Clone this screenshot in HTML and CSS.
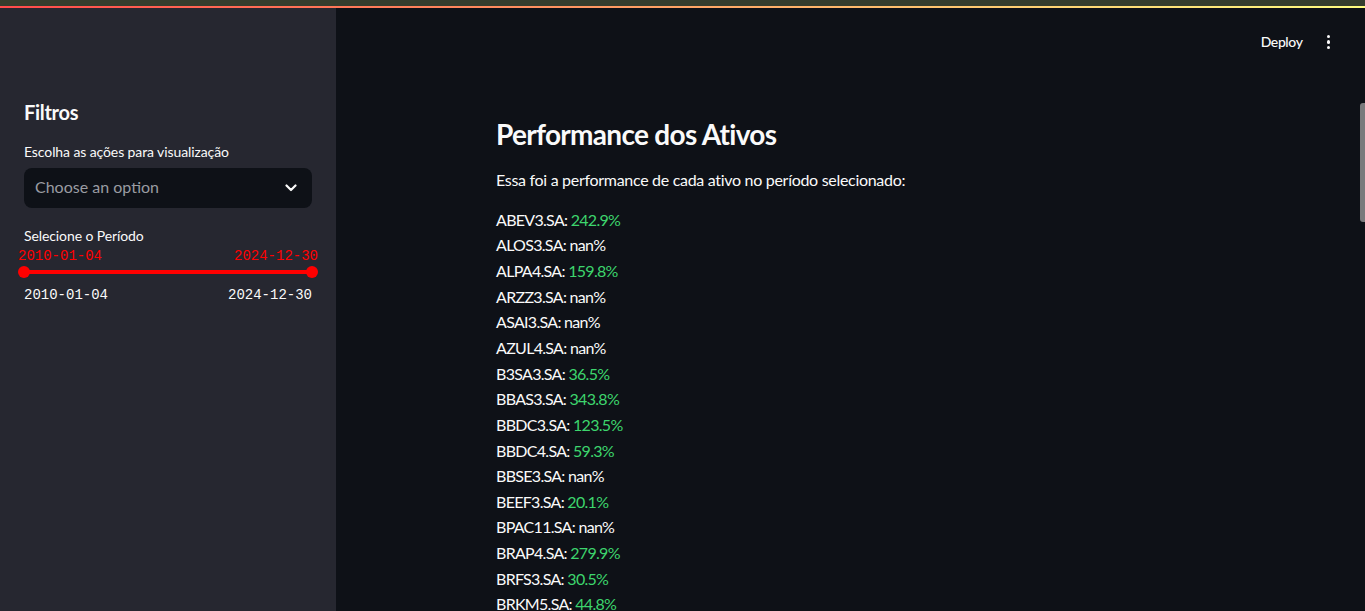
FILE: index.html
```html
<!DOCTYPE html>
<html lang="pt">
<head>
<meta charset="utf-8">
<title>Performance dos Ativos</title>
<link rel="stylesheet" href="styles.css">
</head>
<body>
<div class="app">
  <div class="topbar"></div>
  <div class="decoration"></div>
  <div class="layout">
    <aside class="sidebar">
      <h3 class="side-title">Filtros</h3>
      <label class="field-label">Escolha as ações para visualização</label>
      <div class="select">
        <span class="placeholder">Choose an option</span>
        <svg class="chevron" width="12" height="8" viewBox="0 0 12 8"><path d="M1.5 1.5 L6 6 L10.5 1.5" fill="none" stroke="#fafafa" stroke-width="2.2" stroke-linecap="round" stroke-linejoin="round"/></svg>
      </div>
      <label class="field-label period">Selecione o Período</label>
      <div class="slider">
        <div class="thumb-values">
          <span>2010-01-04</span>
          <span>2024-12-30</span>
        </div>
        <div class="track-row">
          <div class="track"></div>
          <span class="thumb thumb-left"></span>
          <span class="thumb thumb-right"></span>
        </div>
        <div class="range-values">
          <span>2010-01-04</span>
          <span>2024-12-30</span>
        </div>
      </div>
    </aside>
    <main class="main">
      <header class="header">
        <span class="deploy">Deploy</span>
        <span class="menu"><i></i><i></i><i></i></span>
      </header>
      <section class="content">
        <h2 class="title">Performance dos Ativos</h2>
        <p class="intro">Essa foi a performance de cada ativo no período selecionado:</p>
        <div class="list">
          <div>ABEV3.SA: <span class="pos">242.9%</span></div>
          <div>ALOS3.SA: nan%</div>
          <div>ALPA4.SA: <span class="pos">159.8%</span></div>
          <div>ARZZ3.SA: nan%</div>
          <div>ASAI3.SA: nan%</div>
          <div>AZUL4.SA: nan%</div>
          <div>B3SA3.SA: <span class="pos">36.5%</span></div>
          <div>BBAS3.SA: <span class="pos">343.8%</span></div>
          <div>BBDC3.SA: <span class="pos">123.5%</span></div>
          <div>BBDC4.SA: <span class="pos">59.3%</span></div>
          <div>BBSE3.SA: nan%</div>
          <div>BEEF3.SA: <span class="pos">20.1%</span></div>
          <div>BPAC11.SA: nan%</div>
          <div>BRAP4.SA: <span class="pos">279.9%</span></div>
          <div>BRFS3.SA: <span class="pos">30.5%</span></div>
          <div>BRKM5.SA: <span class="pos">44.8%</span></div>
        </div>
      </section>
      <div class="scrollbar"></div>
    </main>
  </div>
</div>
</body>
</html>
```
FILE: styles.css
```css
* { box-sizing: border-box; }
html, body {
  margin: 0;
  padding: 0;
  height: 611px;
  overflow: hidden;
  background: #0e1117;
  color: #fafafa;
  font-family: Lato, "Noto Sans", sans-serif;
}
.app {
  display: flex;
  flex-direction: column;
  height: 611px;
}
.topbar {
  height: 6px;
  background: #353d2d;
  flex: none;
}
.decoration {
  height: 2px;
  flex: none;
  background: linear-gradient(90deg, #ff4b4b, #fffd80);
}
.layout {
  display: flex;
  flex: 1;
  min-height: 0;
}
.sidebar {
  width: 336px;
  flex: none;
  background: #262730;
  padding: 92px 24px 0 24px;
  display: flex;
  flex-direction: column;
}
.side-title {
  margin: 0;
  font-size: 20px;
  line-height: 24px;
  font-weight: 700;
  letter-spacing: -0.3px;
}
.field-label {
  display: block;
  margin-top: 17px;
  font-size: 14px;
  line-height: 22px;
  letter-spacing: -0.1px;
}
.select {
  margin-top: 5px;
  height: 40px;
  border-radius: 8px;
  background: #0e1117;
  display: flex;
  align-items: center;
  justify-content: space-between;
  padding: 0 15px 0 11px;
}
.placeholder {
  font-size: 16px;
  line-height: 20px;
  color: #9a9ca2;
  margin-top: -2px;
}
.chevron { display: block; }
.period { margin-top: 17px; }
.slider {
  display: flex;
  flex-direction: column;
  margin-top: 1px;
}
.thumb-values,
.range-values {
  display: flex;
  justify-content: space-between;
  font-family: "Liberation Mono", "DejaVu Sans Mono", monospace;
  font-size: 14px;
  line-height: 16px;
}
.thumb-values {
  color: #ff0000;
  margin: 0 -6px;
}
.track-row {
  position: relative;
  height: 12px;
  margin-top: 2px;
  display: flex;
  align-items: center;
}
.track {
  flex: 1;
  height: 4px;
  background: #ff0000;
}
.thumb {
  position: absolute;
  top: 0;
  width: 12px;
  height: 12px;
  border-radius: 50%;
  background: #ff0000;
}
.thumb-left { left: -6px; }
.thumb-right { right: -6px; }
.range-values {
  margin-top: 9px;
  color: #fafafa;
}
.main {
  position: relative;
  flex: 1;
  display: flex;
  flex-direction: column;
  min-width: 0;
}
.header {
  height: 68px;
  flex: none;
  display: flex;
  align-items: center;
  justify-content: flex-end;
  padding: 0 33px 0 0;
  gap: 22px;
}
.deploy {
  font-size: 14px;
  font-weight: 500;
  letter-spacing: -0.4px;
  margin-top: -2px;
}
.menu {
  display: flex;
  flex-direction: column;
  gap: 2px;
  padding: 0 2px;
}
.menu i {
  display: block;
  width: 3.5px;
  height: 3.5px;
  border-radius: 50%;
  background: #fafafa;
}
.content {
  padding: 41px 0 0 160px;
}
.title {
  margin: 0;
  font-size: 28px;
  line-height: 34px;
  font-weight: 700;
  letter-spacing: -0.7px;
}
.intro {
  margin: 16px 0 0 0;
  font-size: 16px;
  line-height: 25.6px;
  letter-spacing: -0.3px;
}
.list {
  margin-top: 14px;
  font-size: 16px;
  line-height: 25.65px;
  letter-spacing: -0.7px;
}
.pos { color: #3dd56d; }
.scrollbar {
  position: absolute;
  right: 0;
  top: 95px;
  width: 5px;
  height: 119px;
  border-radius: 3px 0 0 3px;
  background: #7a7a7c;
}
```
